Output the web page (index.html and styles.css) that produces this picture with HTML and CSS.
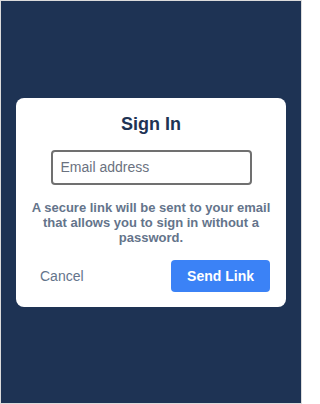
FILE: index.html
```html
<!DOCTYPE html>
<html lang="en">
<head>
<meta charset="utf-8">
<title>Sign In</title>
<link rel="stylesheet" href="styles.css">
</head>
<body>
<div class="page">
  <div class="card">
    <h1 class="title">Sign In</h1>
    <input class="email" type="email" placeholder="Email address">
    <p class="note">A secure link will be sent to your email that allows you to sign in without a password.</p>
    <div class="actions">
      <button class="btn-cancel" type="button">Cancel</button>
      <button class="btn-send" type="button">Send Link</button>
    </div>
  </div>
</div>
</body>
</html>
```

FILE: styles.css
```css
* { box-sizing: border-box; }
html, body { margin: 0; padding: 0; overflow: hidden; background: #ffffff; }
body { font-family: "Liberation Sans", Arial, sans-serif; }
.page {
  width: 302px;
  height: 404px;
  background: #1e3354;
  border: 1px solid #dcdcdc;
  display: flex;
  align-items: center;
  justify-content: center;
}
.card {
  width: 270px;
  background: #ffffff;
  border-radius: 8px;
  padding: 15px 16px 15px;
  display: flex;
  flex-direction: column;
  align-items: center;
  gap: 15px;
}
.title {
  margin: 0;
  font-size: 18px;
  line-height: 22px;
  font-weight: 700;
  color: #1e3354;
}
.email {
  width: 201px;
  height: 35px;
  border: 2px solid #707070;
  border-radius: 4px;
  padding: 0 8px;
  font-family: "Liberation Sans", Arial, sans-serif;
  font-size: 14px;
  color: #333;
  outline: none;
}
.email::placeholder { color: #6b7280; }
.note {
  align-self: stretch;
  margin: 0 -4px;
  font-size: 13px;
  line-height: 15px;
  font-weight: 700;
  color: #64748b;
  text-align: center;
}
.actions {
  align-self: stretch;
  display: flex;
  justify-content: space-between;
  align-items: center;
}
.btn-cancel {
  background: none;
  border: none;
  padding: 0 8px;
  height: 32px;
  font-family: "Liberation Sans", Arial, sans-serif;
  font-size: 14px;
  color: #64748b;
}
.btn-send {
  background: #3b82f6;
  border: none;
  border-radius: 4px;
  height: 32px;
  padding: 0 16px;
  font-family: "Liberation Sans", Arial, sans-serif;
  font-size: 14px;
  font-weight: 700;
  color: #ffffff;
}
```
